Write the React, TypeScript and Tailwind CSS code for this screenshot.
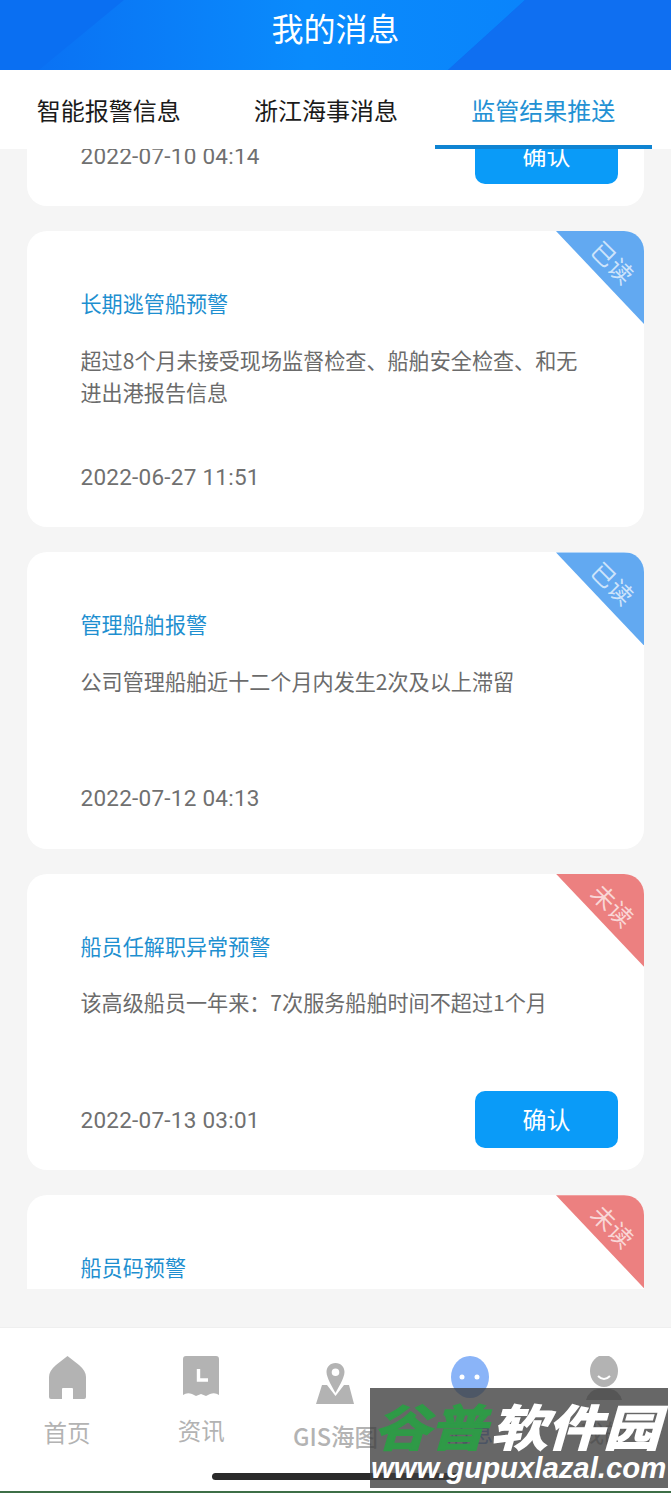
import type { ReactNode } from "react";

const CJK = "font-['Noto_Sans_CJK_SC','Noto_Sans',sans-serif]";

interface Message {
  title: string;
  lines: string[];
  time: string;
  read: boolean;
}

const messages: Message[] = [
  { title: "", lines: [], time: "2022-07-10 04:14", read: false },
  {
    title: "长期逃管船预警",
    lines: ["超过8个月未接受现场监督检查、船舶安全检查、和无", "进出港报告信息"],
    time: "2022-06-27 11:51",
    read: true,
  },
  {
    title: "管理船舶报警",
    lines: ["公司管理船舶近十二个月内发生2次及以上滞留"],
    time: "2022-07-12 04:13",
    read: true,
  },
  {
    title: "船员任解职异常预警",
    lines: ["该高级船员一年来：7次服务船舶时间不超过1个月"],
    time: "2022-07-13 03:01",
    read: false,
  },
  { title: "船员码预警", lines: [], time: "", read: false },
];

const MessageCard = ({ msg }: { msg: Message }) => (
  <div className="relative h-[296.4px] shrink-0 overflow-hidden rounded-[20px] bg-white pl-[53.5px] pr-[26px]">
    {msg.title && (
      <div className={msg.read ? "absolute right-0 top-0 h-[93px] w-[88px] bg-[#62a9f1] [clip-path:polygon(0_0,100%_0,100%_100%)]" : "absolute right-0 top-0 h-[93px] w-[88px] bg-[#ec8080] [clip-path:polygon(0_0,100%_0,100%_100%)]"}>
        <span className="absolute left-[33px] top-[17px] rotate-45 whitespace-nowrap text-[24px] leading-[28px] text-white/70">
          {msg.read ? "已读" : "未读"}
        </span>
      </div>
    )}
    <div className="h-[57px]" />
    <div className="h-[30px] text-[21.1px] leading-[30px] text-[#1e8fd0]">{msg.title}</div>
    <div className="mt-[25.5px] h-[96px] text-[21.1px] leading-[32px] text-[#6b6b6b]">
      {msg.lines.map((line) => (
        <div key={line}>{line}</div>
      ))}
    </div>
    <div className="absolute bottom-[22.5px] left-[53.5px] right-[26px] flex h-[57px] items-center justify-between">
      <span className="pt-[3px] font-['Roboto',sans-serif] text-[22.5px] tracking-[0.25px] text-[#707070]">{msg.time}</span>
      {!msg.read && (
        <button className="flex h-[57px] w-[143px] items-center justify-center rounded-[10px] bg-[#0a9bf8] text-[24px] text-white">
          确认
        </button>
      )}
    </div>
  </div>
);

const NavItem = ({ label, color, iconClass, labelClass, children }: { label: string; color: string; iconClass: string; labelClass: string; children: ReactNode }) => (
  <div className="flex flex-col items-center">
    <div className={`flex h-[50px] items-start justify-center ${iconClass}`}>{children}</div>
    <span className={`text-[23.5px] leading-[34px] ${color} ${labelClass}`}>{label}</span>
  </div>
);

export default function App() {
  return (
    <div className={`relative flex h-[1493px] w-[671px] flex-col overflow-hidden bg-[#f5f5f5] ${CJK}`}>
      {/* Header */}
      <div className="relative h-[70px] shrink-0 overflow-hidden bg-[#0a6ff2]">
        <svg className="absolute inset-0" width="671" height="70" viewBox="0 0 671 70">
          <defs>
            <linearGradient id="facet" x1="0" y1="0" x2="1" y2="0">
              <stop offset="0" stopColor="#0a72f4" />
              <stop offset="0.55" stopColor="#0a8bfc" />
              <stop offset="1" stopColor="#0a84fb" />
            </linearGradient>
          </defs>
          <polygon points="124,0 525,0 448,70 39,70" fill="url(#facet)" />
          <polygon points="525,0 671,0 671,70 448,70" fill="#0f6ff1" />
        </svg>
        <div className="relative text-center text-[32px] leading-[54px] text-white">我的消息</div>
      </div>

      {/* Tabs */}
      <div className="relative z-10 grid h-[79px] w-full shrink-0 grid-cols-[652px] bg-white">
        <div className="grid grid-cols-3 text-[24px]">
          <div className="flex items-center justify-center text-[#1a1a1a]">智能报警信息</div>
          <div className="flex items-center justify-center text-[#1a1a1a]">浙江海事消息</div>
          <div className="flex items-center justify-center border-b-[4px] border-[#0f84d2] pt-[4px] text-[#2391d4]">监管结果推送</div>
        </div>
      </div>

      {/* Message list */}
      <div className="h-[1140px] shrink-0 overflow-hidden px-[27px]">
        <div className="-mt-[239.4px] flex flex-col gap-[25px]">
          {messages.map((msg, i) => (
            <MessageCard key={i} msg={msg} />
          ))}
        </div>
      </div>

      {/* Bottom nav */}
      <div className="mt-[38px] grid flex-1 grid-cols-5 border-t border-[#efefef] bg-white pt-[28px]">
        <NavItem label="首页" color="text-[#b3b3b3]" iconClass="" labelClass="mt-[9px]">
          <svg width="37" height="43" viewBox="0 0 37 43">
            <path d="M18.5 0 L30 9 Q37 15 37 21 V41 Q37 43 35 43 H24 V33 Q24 32 23 32 H14 Q13 32 13 33 V43 H2 Q0 43 0 41 V21 Q0 15 7 9Z" fill="#b3b3b3" />
          </svg>
        </NavItem>
        <NavItem label="资讯" color="text-[#b3b3b3]" iconClass="" labelClass="mt-[7px]">
          <svg width="36" height="41" viewBox="0 0 36 41">
            <path d="M3 0 H33 Q36 0 36 3 V39 Q32 36 27 38 L23 40 L18 38 L13 40 L9 38 Q4 36 0 39 V3 Q0 0 3 0Z" fill="#b3b3b3" />
            <path d="M15.5 13 V24 H25" fill="none" stroke="#fff" strokeWidth="3.4" />
          </svg>
        </NavItem>
        <NavItem label="GIS海图" color="text-[#b3b3b3]" iconClass="translate-y-[7px]" labelClass="mt-[13px] font-medium">
          <svg width="39" height="41" viewBox="0 0 39 41">
            <path d="M6 22 H11 L19.5 33 L28 22 H33 L38 41 H0 Z" fill="#b3b3b3" />
            <path fillRule="evenodd" d="M19.5 0 C14 0 10.5 4 10.5 9 C10.5 15 17 25 19.5 30 C22 25 28.5 15 28.5 9 C28.5 4 25 0 19.5 0Z M19.5 5.5 A3.8 3.8 0 1 1 19.5 13.1 A3.8 3.8 0 1 1 19.5 5.5Z" fill="#b3b3b3" />
          </svg>
        </NavItem>
        <NavItem label="消息" color="text-[#7fa8ef]" iconClass="" labelClass="mt-[9px]">
          <svg width="40" height="44" viewBox="0 0 40 44">
            <ellipse cx="20" cy="21" rx="19" ry="21" fill="#8ab4f8" />
            <circle cx="12" cy="21" r="2.5" fill="#fff" />
            <circle cx="27" cy="21" r="2.5" fill="#fff" />
          </svg>
        </NavItem>
        <NavItem label="我的" color="text-[#b3b3b3]" iconClass="" labelClass="mt-[9px]">
          <svg width="40" height="44" viewBox="0 0 40 44">
            <ellipse cx="20" cy="15" rx="14" ry="16" fill="#b3b3b3" />
            <path d="M14 20 Q20 26 26 20" fill="none" stroke="#fff" strokeWidth="2" />
            <path d="M2 44 Q5 34 14 33 H26 Q35 34 38 44Z" fill="#b3b3b3" />
          </svg>
        </NavItem>
      </div>

      {/* Home indicator */}
      <div className="absolute bottom-[13px] left-[212px] h-[7px] w-[247px] rounded-full bg-[#2a2a2a]" />

      {/* Watermark */}
      <div className="absolute left-[370px] top-[1388px] h-[100px] w-[298px] overflow-hidden whitespace-nowrap bg-[#3c3c3c]/78">
        <div className="mt-[9px] flex h-[56px] origin-left scale-x-[1.15] items-center pl-[3px] text-[49px] font-bold italic leading-[56px]">
          <span className="text-[#2f9a47] [-webkit-text-stroke:1.5px_#2f9a47]">谷普</span>
          <span className="ml-[4px] text-white [-webkit-text-stroke:1.5px_#fff]">软件园</span>
        </div>
        <div className="pl-[1px] font-['Liberation_Sans',sans-serif] text-[29.3px] font-bold italic leading-[30px] text-white">
          www.gupuxlazal.com
        </div>
      </div>

      {/* Green edge at the very bottom */}
      <div className="absolute bottom-0 left-0 h-[2px] w-full bg-[#3d6f47]" />
    </div>
  );
}
